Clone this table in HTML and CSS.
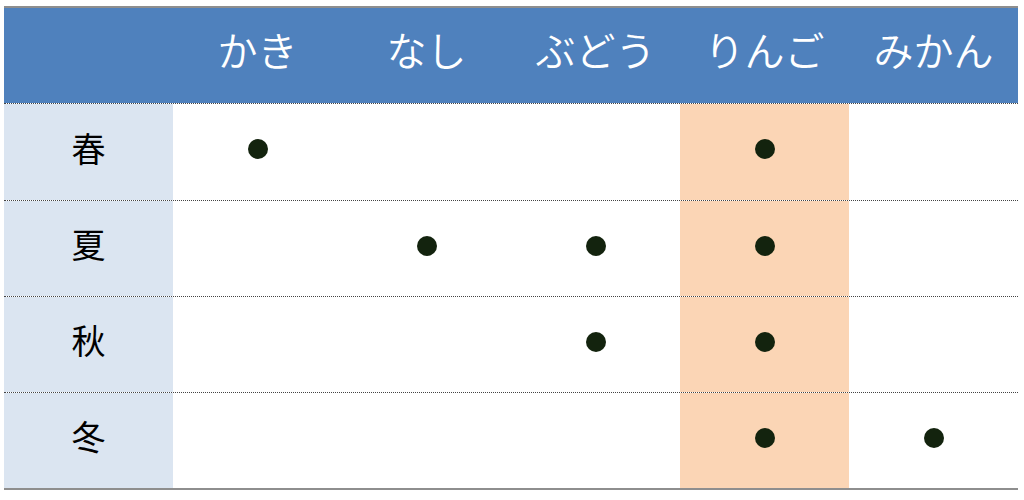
FILE: index.html
```html
<!DOCTYPE html>
<html lang="ja">
<head>
<meta charset="utf-8">
<link rel="stylesheet" href="styles.css">
</head>
<body>
<div class="table">
  <div class="row head">
    <div class="cell"></div>
    <div class="cell">かき</div>
    <div class="cell">なし</div>
    <div class="cell">ぶどう</div>
    <div class="cell">りんご</div>
    <div class="cell">みかん</div>
  </div>
  <div class="row body first">
    <div class="cell label">春</div>
    <div class="cell"><span class="dot"></span></div>
    <div class="cell"></div>
    <div class="cell"></div>
    <div class="cell hl"><span class="dot"></span></div>
    <div class="cell"></div>
  </div>
  <div class="row body">
    <div class="cell label">夏</div>
    <div class="cell"></div>
    <div class="cell"><span class="dot"></span></div>
    <div class="cell"><span class="dot"></span></div>
    <div class="cell hl"><span class="dot"></span></div>
    <div class="cell"></div>
  </div>
  <div class="row body">
    <div class="cell label">秋</div>
    <div class="cell"></div>
    <div class="cell"></div>
    <div class="cell"><span class="dot"></span></div>
    <div class="cell hl"><span class="dot"></span></div>
    <div class="cell"></div>
  </div>
  <div class="row body last">
    <div class="cell label">冬</div>
    <div class="cell"></div>
    <div class="cell"></div>
    <div class="cell"></div>
    <div class="cell hl"><span class="dot"></span></div>
    <div class="cell"><span class="dot"></span></div>
  </div>
</div>
</body>
</html>
```
FILE: styles.css
```css
html, body {
  margin: 0;
  padding: 0;
  background: #ffffff;
}
body {
  padding: 6px 0 0 4px;
  font-family: "Noto Sans CJK JP", "Noto Sans", sans-serif;
}
.table {
  width: 1014px;
  border-top: 2px solid #8e8e8e;
  border-bottom: 2px solid #8e8e8e;
}
.row {
  display: grid;
  grid-template-columns: repeat(6, 169px);
}
.head {
  height: 95px;
  background: #4f81bd;
  color: #ffffff;
  font-size: 40px;
  font-weight: 350;
}
.head .cell {
  padding-bottom: 14px;
}
.body {
  height: 96px;
  border-top: 1px dotted #444444;
  box-sizing: border-box;
}
.body.first {
  height: 97px;
}
.cell {
  display: flex;
  align-items: center;
  justify-content: center;
  box-sizing: border-box;
}
.body .cell {
  padding-bottom: 6px;
}
.body .label {
  background: #dbe5f1;
  font-size: 34px;
  color: #000000;
  padding-bottom: 10px;
}
.hl {
  background: #fbd5b5;
}
.dot {
  width: 20px;
  height: 20px;
  border-radius: 50%;
  background: #13230e;
}
```
